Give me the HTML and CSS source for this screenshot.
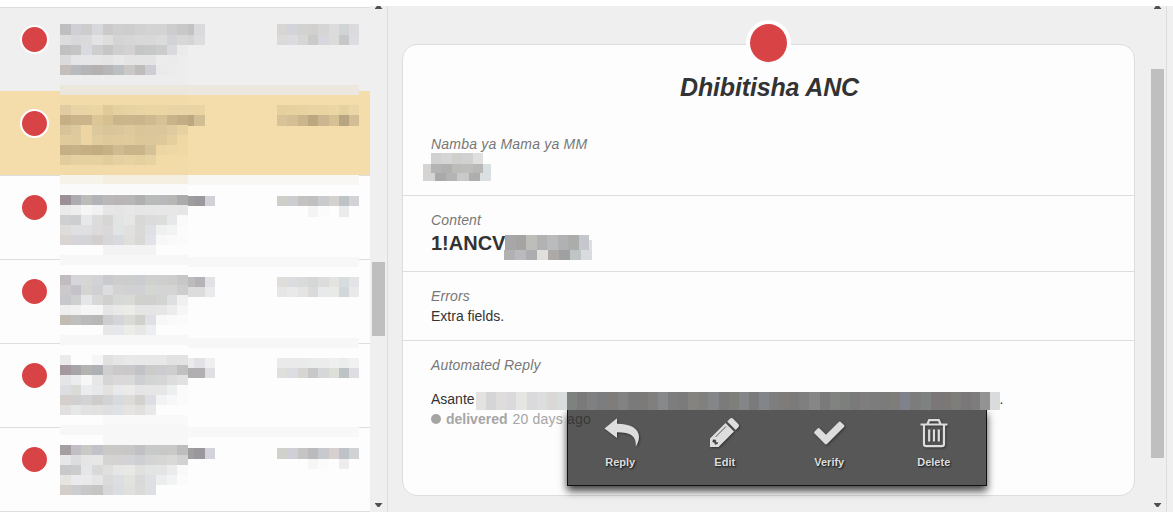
FILE: index.html
```html
<!DOCTYPE html>
<html lang="sw">
<head>
<meta charset="utf-8">
<title>Dhibitisha ANC</title>
<link rel="stylesheet" href="styles.css">
</head>
<body>
<main class="app">
  <section class="inbox">
    <ul class="list">
      <li class="item read"><i class="dot"></i><svg class="mask" data-mask="m1"></svg></li>
      <li class="item selected"><i class="dot"></i><svg class="mask" data-mask="m2"></svg></li>
      <li class="item"><i class="dot"></i><svg class="mask" data-mask="m3"></svg></li>
      <li class="item"><i class="dot"></i><svg class="mask" data-mask="m4"></svg></li>
      <li class="item"><i class="dot"></i><svg class="mask" data-mask="m5"></svg></li>
      <li class="item"><i class="dot"></i><svg class="mask" data-mask="m6"></svg></li>
    </ul>
    <div class="scroll scroll-left"><i class="up"></i><i class="thumb"></i><i class="down"></i></div>
  </section>
  <section class="detail">
    <article class="card">
      <i class="status"></i>
      <h1 class="title">Dhibitisha ANC</h1>
      <div class="field field-id"><span class="label">Namba ya Mama ya MM</span><svg class="mask mask-id" data-mask="id"></svg></div>
      <div class="field field-content"><span class="label">Content</span><div class="code">1!ANCV<svg class="mask mask-code" data-mask="code"></svg></div></div>
      <div class="field field-errors"><span class="label">Errors</span><span class="value">Extra fields.</span></div>
      <div class="field field-reply"><span class="label">Automated Reply</span>
        <div class="message">Asante<svg class="mask mask-message" data-mask="message"></svg>.</div>
        <div class="delivery"><i class="bullet"></i><b>delivered</b><span class="age">20 days ago</span></div>
      </div>
      <nav class="actions">
        <a class="action"><svg class="icon" width="35" height="30" viewBox="0 0 35 30"><path d="M.5 10.500 13 .3v5.400c14 0 22 5 22 13.100 0 4-1.500 7-3.200 9.800C32.500 18 27 14.200 13 14.200V20z"/></svg>Reply</a>
        <a class="action"><svg class="icon" width="30" height="30" viewBox="0 0 30 30"><path fill-rule="evenodd" d="M0 29v-8.500L15.500 5l8.500 8.500L8.500 29zM3 21.500 2.400 24l2 .7.600 2 2.600-.7.500-1.500-1.900-.5-.5-2.200z"/><path d="m17.300 3.500 2.600-2.700q1.600-1.400 3.200 0l5.200 5.200q1.400 1.600 0 3.200l-2.600 2.700z"/><path class="cut" d="M5.500 19 16 8.500"/></svg>Edit</a>
        <a class="action"><svg class="icon" width="31" height="30" viewBox="0 0 31 30"><path d="M.6 13.400 3.600 10.400q1-.9 2 0l6.400 6.300L24.800 3.900q1-.9 2 0l3.200 3.200q.9 1 0 2L13 26q-1 .9-2 0L.6 15.400q-.9-1 0-2z"/></svg>Verify</a>
        <a class="action"><svg class="icon" width="28" height="30" viewBox="0 0 28 30"><g class="line"><path d="M.5 6.500h27M7.500 6 9.200 2.200h9.600L20.500 6M4 7v19q0 2.200 2.200 2.200h15.600Q24 28.200 24 26V7M9.200 11.500V23.500M14 11.500V23.500M18.800 11.500V23.500"/></g></svg>Delete</a>
      </nav>
    </article>
  </section>
  <div class="scroll scroll-right"><i class="up"></i><i class="thumb"></i><i class="down"></i></div>
</main>
<script src="mask.js"></script>
</body>
</html>
```
FILE: styles.css
```css
* { box-sizing: border-box; }
body { margin: 0; background: #fff; color: #333; font: 14px/20px "Liberation Sans", Arial, sans-serif; overflow: hidden; }
.app { display: flex; height: 512px; padding-top: 6px; }
.inbox { display: flex; width: 388px; border-right: 1px solid #ddd; background: #efefef; }
.list { width: 370px; margin: 0; padding: 0; list-style: none; background: #fff; padding-top: 1px; }
.list::before { content: ""; display: block; height: 1px; background: #ddd; }
.item { display: flex; height: 84px; border-bottom: 1px solid #ddd; background: #fdfdfd; padding-left: 20px; }
.item.read { background: #efefef; }
.item.selected { background: #f5ddab; margin-top: -1px; height: 85px; }
.item.selected .dot { margin-top: 18px; }
.item.selected .mask { margin-top: 1px; }
.dot { flex: none; width: 29px; height: 29px; margin: 17px 11px 0 0; border: 2px solid #fdfdfd; border-radius: 50%; background: #d84446; }
.mask { display: inline-block; flex: none; width: 299px; height: 83px; overflow: visible; }
.scroll { display: flex; flex-direction: column; align-items: center; width: 17px; background: #efefef; }
.up, .down { flex: none; width: 8px; height: 4px; background: #505050; }
.up { height: 3px; margin-bottom: 1px; clip-path: polygon(30% 0, 70% 0, 100% 100%, 0 100%); }
.down { clip-path: polygon(0 0, 100% 0, 60% 100%, 40% 100%); margin-top: auto; margin-bottom: 5px; }
.thumb { flex: none; width: 13px; background: #bfbfbf; }
.scroll-left .thumb { height: 74px; margin-top: 252px; }
.scroll-right .thumb { height: 389px; margin-top: 59px; }
.scroll-right { width: 25px; padding: 0 7px 0 1px; background: linear-gradient(90deg, #efefef 18px, #ddd 18px 19px, #f0f0f0 19px); }
.detail { width: 760px; padding: 38px 0 0 14px; background: #efefef; }
.card { position: relative; width: 733px; height: 452px; border: 1px solid #ddd; border-radius: 15px; background: #fdfdfd; }
.status { position: absolute; left: 343px; top: -25px; width: 45px; height: 46px; border: 4px solid #fdfdfd; border-radius: 50%; background: #d84446; }
.title { height: 75px; margin: 0; padding: 27px 0 0 2px; text-align: center; letter-spacing: -.15px; font: italic bold 25px/30px "Liberation Sans", Arial, sans-serif; }
.field { display: flex; flex-direction: column; align-items: flex-start; padding: 14px 28px 0; }
.field + .field { border-top: 1px solid #ddd; }
.field-id { height: 75px; }
.field-content { height: 76px; }
.field-errors { height: 69px; }
.label { font-style: italic; color: #777; letter-spacing: .15px; }
.field-id .label { letter-spacing: .2px; }
.mask-id { width: 60px; height: 30px; }
.code { display: flex; font-size: 20px; line-height: 26px; font-weight: bold; }
.mask-code { width: 88px; height: 25px; margin-left: -1px; }
.message { display: flex; height: 20px; margin-top: 14px; }
.mask-message { position: relative; z-index: 2; width: 524px; height: 18px; margin: 3px 0 0 1px; }
.delivery { display: flex; align-items: center; color: #a5a5a5; }
.bullet { width: 10px; height: 10px; margin-right: 5px; border-radius: 50%; background: #a5a5a5; }
.age { margin-left: 5px; letter-spacing: .2px; }
.actions { position: absolute; left: 164px; top: 364px; display: flex; width: 420px; height: 77px; border: 1px solid #111; background: rgba(0,0,0,.655); box-shadow: 0 5px 8px rgba(0,0,0,.75); }
.action { flex: 1; display: flex; flex-direction: column; align-items: center; padding-top: 8px; color: #ddd; font-size: 11px; line-height: 14px; font-weight: bold; text-shadow: 1px 1px 2px #111; }
.icon { margin-bottom: 7px; fill: #ddd; filter: drop-shadow(1px 1px 1px #333); }
.action:first-child .icon { margin-left: 2px; }
.cut { stroke: #575757; stroke-width: 1; fill: none; }
.line { stroke: #ddd; stroke-width: 2.2; fill: none; }
```
FILE: mask.js
```javascript
// Each strip: x, y, cell width, height, then cell shades (2 digits = grey, 6 = colour).
const C = 10.667, D = 10.3;
const masks = {
  m1: [
    [0,16,C,11,"c0bfbf cfcfd5 cdcdcd d7d8dc cbcac9 cfcfcf cdcdcd d1d1d1 d3d3d3 d3d3d3 cdcdcd c8c8c8"],
    [0,27,C,10,"dcdbdd d7d8da dadada e3e3e5 dededc d4d4d6 d6d6d7 d8d8d8 d8d8d8 dbdbdb d2d3d6 d7d7d7"],
    [0,37,C,10,"c1c1c2 c5c5c5 d9dadf cecece c5c6c6 cfcfcf d3d1d1 c5c7c7 c7c8c8 cccccc d9dade eb"],
    [0,47,C,10,"dbdbdb e5e5e7 e6e6e8 e6 e4 e8 e4 e4 e4 ec eb ed"],
    [0,57,C,10,"c5bfbc b9babd b5b4b6 b4b1b0 b7b7ba babfc1 cac8c6 bfbcbb cdced3 ea ec ed"],
    [0,67,128,10,"ed"],
    [128,16,6,10.500,"c3c3c3"],[134,16,11,10.500,"dadadc"],[128,26.500,6,10,"d4"],[134,26.500,11,10,"dddddf"],
    [217,16,D,10.500,"d7d6d5 d3d4d9 d2d2d1 d1d0cf d5d5d5 dddcdc d0d4d7 dbdbdd"],
    [217,26.500,D,10,"dbdad9 dcdce0 d6d6d5 cacac9 d6d7dc dbdbda c6c7c8 dcdde0"]
  ],
  m2: [
    [0,-7,299,10,"ede8df"],
    [0,-7,128,10,"ebe7dc"],[0,3,128,10,"f2dba8"],
    [0,13,C,10,"e0cca0 e8d4a5 e8d4a5 ebd5a3 e0ca9a e4d0a0 e7d2a2 e8d4a5 ebd5a3 ebd5a3 e8d4a5 e8d4a5"],
    [0,23,C,10,"c6af84 cbb489 cbb489 dcc597 d6c08f cab48a cbb58c c9b48c cfb98e d6c095 c9b38b c4ad84"],
    [0,33,C,9.500,"d6c399 ddc99d ecd5a1 dbc89c d8c498 dac69a ddc99c d8c599 dac69a dbc69b decb9f e6d1a1"],
    [0,42.500,C,10.500,"e0cb9c dfca9d ecd5a2 e0cc9e ddc99a e0ca9b e0cb9c dcc79a dbc799 ddc99c e5cf9d efd8a4"],
    [0,53,C,10,"c6af85 c7b187 c5ae82 c3ac80 c6b086 cebb90 c9b38a cab58b d5c197 edd6a1 eed8a6 f0d9a5"],
    [0,63,C,10,"e0cc9c e4d0a0 e5d1a0 e5d1a0 e1cc9c e4d0a0 e7d2a2 e4cf9e e7d2a2 f2dba7 f2dba7 f2dba7"],
    [0,73,128,10,"f2dba8"],
    [128,13,17,10,"ead4a3"],[128,23,6,10.500,"bca880"],[134,23,11,10.500,"d2be94"],
    [217,13,D,10,"e4cf9d e7d19f e8d2a1 e9d5a3 ead4a2 ebd6a6 e5d1a0 ead6a7"],
    [217,23,D,10.500,"d8c297 d4bf94 cab58c bba780 cbb68f d7c194 b6a580 d3bd94"]
  ],
  m3: [
    [0,-1.500,299,10.500,"f8f7f4"],[0,-1.500,128,10,"f6f3eb"],[43,-1.500,85,10,"f4efe1"],[0,8,128,10,"fa"],
    [0,18.500,C,10.500,"9b9095 aeabb0 bbbbb9 b1b3b6 bab8b8 b9b5b6 b9b6b7 b0b0b2 b9baba b7b9ba b7b8b6 aaabab"],
    [0,29,C,10,"eaeaea eeeeee f6 f1 e6 e5 e7 e5 e6 e7 e7 e6"],
    [0,39,C,10,"cfd0d2 cecece e6e8ea dcdcdc d6d7d5 e1e4e3 e6e6e4 d8d9d7 dbdbdb dddedb e7e8ea fa"],
    [0,49,C,10,"dfdbd9 dfe0e2 dfdfe1 dcdadb dad8d9 e1e4e5 e2e1df d9dad7 dee0e5 eff0f0 f3 fb"],
    [0,59,C,9.500,"dad5d3 d5d5d9 d4d3d7 d2cfcd d7d7d9 d8dadd e0dfdc d8d9d7 e1e3e9 f8 fa fb"],
    [43,68.500,53,10,"f3"],
    [128,20,6.500,10,"9f9d9d"],[134.500,20,10.500,10,"9b999d"],[145,20,10,10,"d1d1d8"],
    [217,20,D,10,"cfcfca cccdd1 c4c3c2 bec0c1 cacbce d5d1cf bec3c6 d2d3d6"],
    [248,30,D,10.500,"f4 fb fd eb"]
  ],
  m4: [
    [0,-5,128,10,"f7"],[128,-3.500,171,10.500,"f7"],
    [0,14.500,C,10.500,"c0bcbf d6d5da d5d6d5 d2d3d4 cac9cd cecece cccdcd caccd0 d0d1cf cecfcf cdcecc c6c7c6"],
    [0,25,C,10,"cdc8cc c5c3c9 d4d5d1 ced0d2 dddce1 d3d3d3 d1d1d4 d0d1d5 d4d6d2 d3d4d3 d4d4d2 cecdcd"],
    [0,35,C,10,"c6c8cb cfcfcf e4e6e8 d7d8d7 d0d1cf d7d8d8 d9d9d6 d0d1ce d0d1ce d3d4d1 dddfe1 f0"],
    [0,45,C,10,"ee f1 f6 f6 e6 e9 ebebe8 e5 e5 e6 ec f6"],
    [0,55,C,10,"c1bbb4 bfbfbf bab9bb b9b7b4 cecdcf d4d5d8 dadad7 d1d0cd dee0e5 f8 fa fb"],
    [43,65,C,10,"e6e7e9 e5e8ea ecece9 e6e7e7 eceff2"],
    [128,17,6.500,10,"bcbcbc"],[134.500,17,10.500,10,"b6b3b8"],[145,17,10,10,"e2e2e6"],
    [128,27,17,10,"dddcdd"],[145,27,10,10,"eaeaed"],
    [217,17,D,10,"dfdedb dbdce0 dadada d5d7d6 dcdcdd e5e3e0 d7dcde e3e4e7"],
    [217,27,D,10,"e6e6e6 e9e9e9 e5e4e2 dadada e7e9eb e9e9e6 d1d7d9 e9"]
  ],
  m5: [
    [0,-9,128,10,"f7"],[128,-6,171,10,"f7"],
    [0,11,C,10,"eb fd fd f6 e1 e6 e9 e8 e8 e8 e2 e3"],
    [0,21,C,10,"a3999e a8a5aa b3b4b1 adb1b5 d0cfcf cbc9ca cac8ca c2c3c7 cbccc9 caccd0 cecece c0c0c0"],
    [0,31,C,10,"e3e5e7 ececec f7 e7 d6d5d5 dad8d9 dad9da cecfd2 d3d4d4 d5d6d5 dddddd e2"],
    [0,41,C,10,"dddee1 dadad7 eaeced e6e8e9 e3e2e1 e8e9ea ebebe9 e4e5e4 e6 e6 edf0f0 fa"],
    [0,51,C,10,"d5cfcc d0d0d2 d3d2d4 cfcdcb d2d3d5 d8dbdd dddcd9 d2d1ce dddee3 f1f3f5 f8 fb"],
    [0,61,C,10,"e1e0df e6e8e7 e2e2e5 e2e1df dfdfe1 dfe2e4 e6e4e1 e1e0de e7e8ea"],
    [43,71,85,10,"f9"],
    [128,14,6,10,"eb"],[134,14,11,10,"e2e1e5"],[145,14,10,10,"ef"],
    [128,24,17,10,"b1afb2"],[145,24,10,10,"dfdfe4"],
    [217,14,D,10,"ea ea ea ebedec ec ef ebeded f1"],
    [217,24,D,10,"dfdfdc dcdde2 d7d6d3 c8c8c8 d5d7d8 dedfd9 bec3c6 dddde3"]
  ],
  m6: [
    [0,-3,128,10,"f7"],[128,-1,171,10,"f8"],[43,7,85,10,"f7"],
    [0,17,C,10,"a69fa1 c1bec5 c9c9c6 c1c3c8 cbc9c7 cac8c6 c7c7c7 c1c1c5 c8c9c9 c7c8c8 c9c9c7 bdbdbd"],
    [0,27,C,10,"e7 dcdddf e5 e7 d4d4d3 d4d2d3 d3d2d4 cecfd3 d4d4d4 d6d6d5 dad9d9 d2d2d3"],
    [0,37,C,10,"c7c9cb cccccc e5e6e9 d9d9d9 dfdfde e5e7e7 e9e8e5 e0e1df e2e3e3 e4 e9ebec f9"],
    [0,47,C,10,"e6e4e1 ebebed ea e5 d9dad9 dcdee0 e2e2df d8d9d8 dee0e3 ebedee f1f4f3 fb"],
    [0,57,C,10,"d3ceca cccdcf c8c7ca c7c5c4 d7d7d9 dbdee1 e0e0de dadad9 dddfe3"],
    [128,20,6,11,"9f9fa0"],[134,20,11,11,"9b989d"],[145,20,10,11,"d3d4db"],
    [217,20,D,11,"d1d1cb cfcfd5 c6c5c3 bbbbbd c8c9cc d6d1ce bcc2c6 d1d2d3"],
    [248,31,D,10,"f6f6f4 fb fd ed"]
  ],
  id: [
    [0,-1,10.400,11,"d1 d5 cfcfcc d1 e0dfde"],
    [-8,10,8,17,"d5d4d3"],[52,10,8,17,"dadfe2"],
    [0,10,10.400,9,"b4 b1b1af bcbcb9 bdbdbc b8"],
    [-8,19,12,8,"d5d4d3"],[4,19,11.200,8,"aaaaac b4b4b6 c8caca aeaeac"],[49,19,11,8,"dadfe2"]
  ],
  code: [
    [1,5,10.500,15,"a7a7a7 a5a4a3 bdbdba b2b2b2 babbbd b0b1b3 acacaa c4c8cc"],
    [85,10,3,11,"dddfe5"],
    [0,20,11,10,"b1b1b0 b8babe adadaf dfdfdc ada9a8 a0a0a0 bfc4c7 d9dbe1"]
  ],
  message: [
    [0,0,10.100,18,"e4e3e2 d5d4d6 dedddc dad9dc e5e5e3 dad9dc dcdddd dad7d7 d8dcdd"],
    [91,0,10.100,18,"7e827f 7a7a7b 808080 7b7c7e 7f7c79 828282 7a7a7b 7a7a7b 807f7d 87888a 7d7d7e 7c7b7c 85837f 80807e 858687 7c7b7b 7e7f7b 838587 7b7979 82858a 7c7f7e 7f7b79 7b7a7a 7f7f7f 858786 7a7a7a 828281 7d7e7e 7b7a7b 807e7c 7d7c7c 7c7b7b 7f7d7a 7f828a 7c7c7c 7f837f 7b7678 7b7776 7d7d79 797777 7c7c7c"],
    [504,0,10,18,"939393 dadbdd"]
  ]
};
document.querySelectorAll("[data-mask]").forEach(svg => {
  for (const [x, y, w, h, shades] of masks[svg.dataset.mask]) {
    shades.split(" ").forEach((s, i) => {
      const r = document.createElementNS("http://www.w3.org/2000/svg", "rect");
      const a = Math.round(x + i * w), b = Math.round(x + (i + 1) * w);
      r.setAttribute("x", a);
      r.setAttribute("y", Math.round(y));
      r.setAttribute("width", b - a);
      r.setAttribute("height", Math.round(y + h) - Math.round(y));
      r.setAttribute("fill", "#" + (s.length === 2 ? s + s + s : s));
      svg.append(r);
    });
  }
});
```
